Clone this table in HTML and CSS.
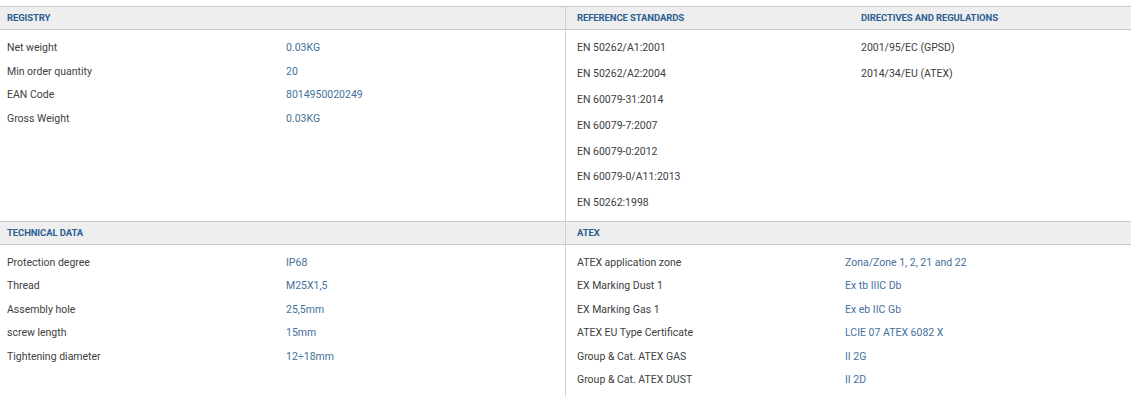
FILE: index.html
```html
<!DOCTYPE html>
<html lang="en">
<head>
<meta charset="utf-8">
<title>Specifications</title>
<link rel="stylesheet" href="styles.css">
</head>
<body>
<div class="spec">
  <div class="band">
    <section class="panel panel-left">
      <h3 class="head">Registry</h3>
      <div class="body kv kv-left">
        <div class="row"><span class="k">Net weight</span><span class="v">0.03KG</span></div>
        <div class="row"><span class="k">Min order quantity</span><span class="v">20</span></div>
        <div class="row"><span class="k">EAN Code</span><span class="v">8014950020249</span></div>
        <div class="row"><span class="k">Gross Weight</span><span class="v">0.03KG</span></div>
      </div>
    </section>
    <section class="panel panel-right split">
      <div class="sub">
        <h3 class="head head-right">Reference standards</h3>
        <ul class="body list">
          <li>EN 50262/A1:2001</li>
          <li>EN 50262/A2:2004</li>
          <li>EN 60079-31:2014</li>
          <li>EN 60079-7:2007</li>
          <li>EN 60079-0:2012</li>
          <li>EN 60079-0/A11:2013</li>
          <li>EN 50262:1998</li>
        </ul>
      </div>
      <div class="sub">
        <h3 class="head head-right">Directives and regulations</h3>
        <ul class="body list">
          <li>2001/95/EC (GPSD)</li>
          <li>2014/34/EU (ATEX)</li>
        </ul>
      </div>
    </section>
  </div>
  <div class="band">
    <section class="panel panel-left">
      <h3 class="head">Technical data</h3>
      <div class="body kv kv-left">
        <div class="row"><span class="k">Protection degree</span><span class="v">IP68</span></div>
        <div class="row"><span class="k">Thread</span><span class="v">M25X1,5</span></div>
        <div class="row"><span class="k">Assembly hole</span><span class="v">25,5mm</span></div>
        <div class="row"><span class="k">screw length</span><span class="v">15mm</span></div>
        <div class="row"><span class="k">Tightening diameter</span><span class="v">12÷18mm</span></div>
      </div>
    </section>
    <section class="panel panel-right">
      <h3 class="head head-right">ATEX</h3>
      <div class="body kv kv-right">
        <div class="row"><span class="k">ATEX application zone</span><span class="v">Zona/Zone 1, 2, 21 and 22</span></div>
        <div class="row"><span class="k">EX Marking Dust 1</span><span class="v">Ex tb IIIC Db</span></div>
        <div class="row"><span class="k">EX Marking Gas 1</span><span class="v">Ex eb IIC Gb</span></div>
        <div class="row"><span class="k">ATEX EU Type Certificate</span><span class="v">LCIE 07 ATEX 6082 X</span></div>
        <div class="row"><span class="k">Group &amp; Cat. ATEX GAS</span><span class="v">II 2G</span></div>
        <div class="row"><span class="k">Group &amp; Cat. ATEX DUST</span><span class="v">II 2D</span></div>
      </div>
    </section>
  </div>
</div>
</body>
</html>
```

FILE: styles.css
```css
* { box-sizing: border-box; }
html, body { margin: 0; padding: 0; background: #fff; }
body {
  font-family: Roboto, "Liberation Sans", sans-serif;
  font-size: 10.5px;
  color: #404040;
  padding-top: 6px;
  width: 1131px;
}
.spec { display: flex; flex-direction: column; }
.band { display: flex; }
.panel-left { width: 565px; flex: none; }
.panel-right { flex: 1; border-left: 1px solid #d0d0d0; }
.split { display: flex; }
.sub { width: 284px; flex: none; }
.sub:last-child { flex: 1; }
.head {
  margin: 0;
  height: 24px;
  line-height: 22px;
  background: #eeeeee;
  border-top: 1px solid #c8c8c8;
  border-bottom: 1px solid #c8c8c8;
  padding-left: 7px;
  font-size: 9.5px;
  font-weight: 700;
  text-transform: uppercase;
  color: #2b5e92;
  letter-spacing: -0.1px;
}
.head-right { padding-left: 11px; }
.body { margin: 0; padding: 6px 0 5px; }
.row { display: flex; height: 23.5px; align-items: center; }
.kv-left .row { padding-left: 7px; }
.kv-left .k { width: 279px; flex: none; }
.kv-right .row { padding-left: 11px; }
.kv-right .k { width: 268px; flex: none; }
.v { color: #45709c; }
.list { list-style: none; padding: 5px 0 5px 11px; }
.list li { height: 25.8px; display: flex; align-items: center; }
```
